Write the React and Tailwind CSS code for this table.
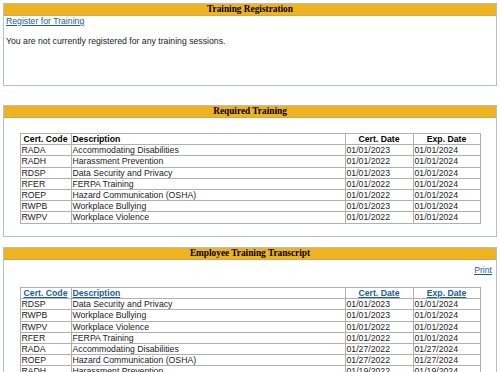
const required = [
    ['RADA', 'Accommodating Disabilities', '01/01/2023', '01/01/2024'],
    ['RADH', 'Harassment Prevention', '01/01/2022', '01/01/2024'],
    ['RDSP', 'Data Security and Privacy', '01/01/2023', '01/01/2024'],
    ['RFER', 'FERPA Training', '01/01/2022', '01/01/2024'],
    ['ROEP', 'Hazard Communication (OSHA)', '01/01/2022', '01/01/2024'],
    ['RWPB', 'Workplace Bullying', '01/01/2023', '01/01/2024'],
    ['RWPV', 'Workplace Violence', '01/01/2022', '01/01/2024'],
];

const transcript = [
    ['RDSP', 'Data Security and Privacy', '01/01/2023', '01/01/2024'],
    ['RWPB', 'Workplace Bullying', '01/01/2023', '01/01/2024'],
    ['RWPV', 'Workplace Violence', '01/01/2022', '01/01/2024'],
    ['RFER', 'FERPA Training', '01/01/2022', '01/01/2024'],
    ['RADA', 'Accommodating Disabilities', '01/27/2022', '01/27/2024'],
    ['ROEP', 'Hazard Communication (OSHA)', '01/27/2022', '01/27/2024'],
    ['RADH', 'Harassment Prevention', '01/19/2022', '01/19/2024'],
];

function Panel({ title, className, children }) {
    return (
        <div className={`border border-[#a9c2da] bg-white ${className}`}>
            <div className="h-[12px] bg-[#efb220] border-b border-[#d4a640] text-center font-bold text-[9.3px] leading-[11px] text-black" style={{ fontFamily: '"Liberation Serif", serif' }}>
                {title}
            </div>
            {children}
        </div>
    );
}

function CertTable({ rows, links }) {
    const head = links ? 'text-[#1a5c9c] underline' : 'text-black';
    return (
        <table className="mx-auto w-[460px] border-collapse table-fixed text-[8.7px] text-[#222]">
            <colgroup>
                <col className="w-[51px]" />
                <col className="w-[274px]" />
                <col className="w-[68px]" />
                <col className="w-[67px]" />
            </colgroup>
            <thead>
                <tr className="h-[11.2px]">
                    <th className={`border border-[#b0b0b0] p-0 leading-[10px] text-center font-bold ${head}`}>Cert. Code</th>
                    <th className={`border border-[#b0b0b0] p-0 pl-[1px] leading-[10px] text-left font-bold ${head}`}>Description</th>
                    <th className={`border border-[#b0b0b0] p-0 leading-[10px] text-center font-bold ${head}`}>Cert. Date</th>
                    <th className={`border border-[#b0b0b0] p-0 leading-[10px] text-center font-bold ${head}`}>Exp. Date</th>
                </tr>
            </thead>
            <tbody>
                {rows.map(r => (
                    <tr key={r[0]} className="h-[11.2px]">
                        {r.map((c, i) => (
                            <td key={i} className="border border-[#b0b0b0] p-0 pl-[1px] leading-[10px] whitespace-nowrap">{c}</td>
                        ))}
                    </tr>
                ))}
            </tbody>
        </table>
    );
}

export default function App() {
    return (
        <div className="h-[372px] overflow-hidden bg-white px-[3px] pt-[3px]" style={{ fontFamily: '"Liberation Sans", Arial, sans-serif' }}>
            <Panel title="Training Registration" className="h-[83px]">
                <div className="px-[2px] text-[8.7px]">
                    <a href="#" className="text-[#1a5c9c] underline leading-[11px] block">Register for Training</a>
                    <p className="mt-[9px] text-[#222] leading-[11px]">You are not currently registered for any training sessions.</p>
                </div>
            </Panel>

            <Panel title="Required Training" className="mt-[19px] h-[132px]">
                <div className="pt-[15px]">
                    <CertTable rows={required} />
                </div>
            </Panel>

            <Panel title="Employee Training Transcript" className="mt-[10px]">
                <div className="flex justify-end pr-[4px] pt-[5px] text-[8.7px]">
                    <a href="#" className="text-[#1a5c9c] underline leading-[11px]">Print</a>
                </div>
                <div className="pt-[11px] pb-2">
                    <CertTable rows={transcript} links />
                </div>
            </Panel>
        </div>
    );
}
